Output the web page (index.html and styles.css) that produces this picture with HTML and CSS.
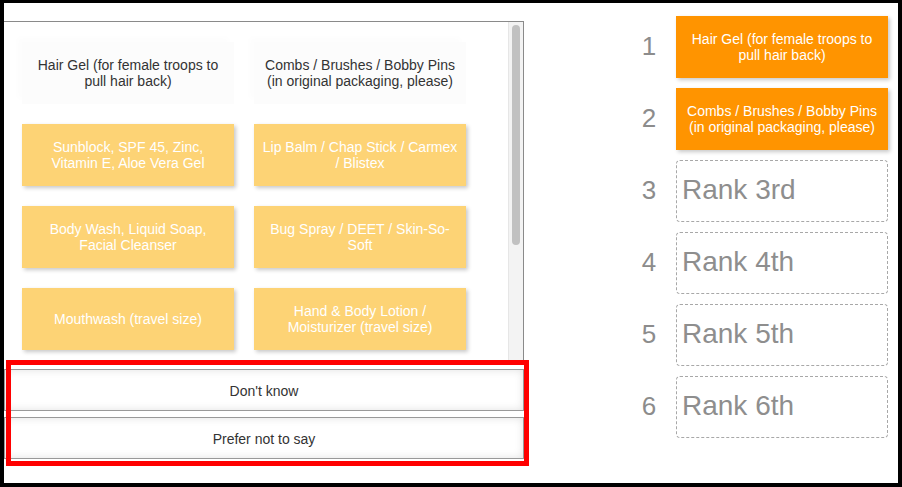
FILE: index.html
```html
<!DOCTYPE html>
<html>
<head>
<meta charset="utf-8">
<link rel="stylesheet" href="styles.css">
</head>
<body>
<div class="frame">
  <div class="left">
    <div class="scroll">
      <div class="items">
        <div class="card ghost">Hair Gel (for female troops to pull hair back)</div>
        <div class="card ghost">Combs / Brushes / Bobby Pins (in original packaging, please)</div>
        <div class="card">Sunblock, SPF 45, Zinc, Vitamin E, Aloe Vera Gel</div>
        <div class="card">Lip Balm / Chap Stick / Carmex / Blistex</div>
        <div class="card">Body Wash, Liquid Soap, Facial Cleanser</div>
        <div class="card">Bug Spray / DEET / Skin-So-Soft</div>
        <div class="card">Mouthwash (travel size)</div>
        <div class="card">Hand &amp; Body Lotion / Moisturizer (travel size)</div>
      </div>
      <div class="track"><div class="thumb"></div></div>
    </div>
    <div class="options">
      <div class="option">Don't know</div>
      <div class="option">Prefer not to say</div>
    </div>
    <div class="highlight"></div>
  </div>
  <div class="right">
    <div class="rank-row"><span class="num">1</span><div class="slot filled">Hair Gel (for female troops to pull hair back)</div></div>
    <div class="rank-row"><span class="num">2</span><div class="slot filled">Combs / Brushes / Bobby Pins (in original packaging, please)</div></div>
    <div class="rank-row"><span class="num">3</span><div class="slot empty">Rank 3rd</div></div>
    <div class="rank-row"><span class="num">4</span><div class="slot empty">Rank 4th</div></div>
    <div class="rank-row"><span class="num">5</span><div class="slot empty">Rank 5th</div></div>
    <div class="rank-row"><span class="num">6</span><div class="slot empty">Rank 6th</div></div>
  </div>
</div>
</body>
</html>
```
FILE: styles.css
```css
* { box-sizing: border-box; }
html, body { margin: 0; padding: 0; background: #fff; }
body { font-family: "Liberation Sans", Arial, Helvetica, sans-serif; }

.frame {
  width: 902px;
  height: 487px;
  border-style: solid;
  border-color: #000;
  border-width: 3px 4px 4px 4px;
  display: flex;
  align-items: flex-start;
  overflow: hidden;
}

.left {
  position: relative;
  width: 520px;
  margin-top: 18px;
  flex: none;
}

.scroll {
  height: 341px;
  border-top: 1px solid #8a8a8a;
  border-right: 1px solid #8a8a8a;
  display: flex;
  overflow: hidden;
}

.items {
  flex: 1;
  padding: 20px 0 0 18px;
  display: grid;
  grid-template-columns: 212px 212px;
  grid-auto-rows: 62px;
  column-gap: 20px;
  row-gap: 20px;
  align-content: start;
}

.card {
  background: #fdd375;
  color: #fff;
  font-size: 14px;
  line-height: 16px;
  text-align: center;
  display: flex;
  align-items: center;
  justify-content: center;
  padding: 0 8px;
  box-shadow: 2px 2px 4px rgba(0, 0, 0, 0.22);
}

.card.ghost {
  background: #fcfcfc;
  color: #333;
  box-shadow: -5px -5px 6px rgba(0, 0, 0, 0.012);
}

.track {
  width: 15px;
  flex: none;
  background: #f3f3f3;
  border-left: 1px solid #e6e6e6;
  padding: 3px 3px 0 3px;
}

.thumb {
  width: 8px;
  height: 220px;
  border-radius: 4px;
  background: #c1c1c1;
}

.options {
  margin-top: 7px;
  display: flex;
  flex-direction: column;
  gap: 6px;
}

.option {
  height: 42px;
  border: 1px solid #999;
  background: #fff;
  color: #333;
  font-size: 14px;
  display: flex;
  align-items: center;
  justify-content: center;
  padding-top: 1px;
  box-shadow: inset 0 0 8px rgba(0, 0, 0, 0.12);
}

.highlight {
  position: absolute;
  left: 2px;
  top: 339px;
  width: 523px;
  height: 106px;
  border: 5px solid #ff0000;
  pointer-events: none;
}

.right {
  margin-left: 105px;
  margin-top: 13px;
  display: flex;
  flex-direction: column;
  gap: 10px;
}

.rank-row {
  display: flex;
  align-items: center;
  gap: 7px;
}

.num {
  width: 40px;
  text-align: center;
  font-size: 26px;
  color: #8c8c8c;
  padding-bottom: 1px;
}

.slot {
  width: 212px;
  height: 62px;
}

.slot.filled {
  background: #ff9400;
  color: #fff;
  font-size: 14px;
  line-height: 16px;
  text-align: center;
  display: flex;
  align-items: center;
  justify-content: center;
  padding: 0 6px;
  box-shadow: 2px 2px 4px rgba(0, 0, 0, 0.22);
}

.slot.empty {
  border: 1px dashed #a8a8a8;
  border-radius: 4px;
  color: #8e8e8e;
  font-size: 28px;
  display: flex;
  align-items: center;
  padding: 0 6px 3px 5px;
}
```
